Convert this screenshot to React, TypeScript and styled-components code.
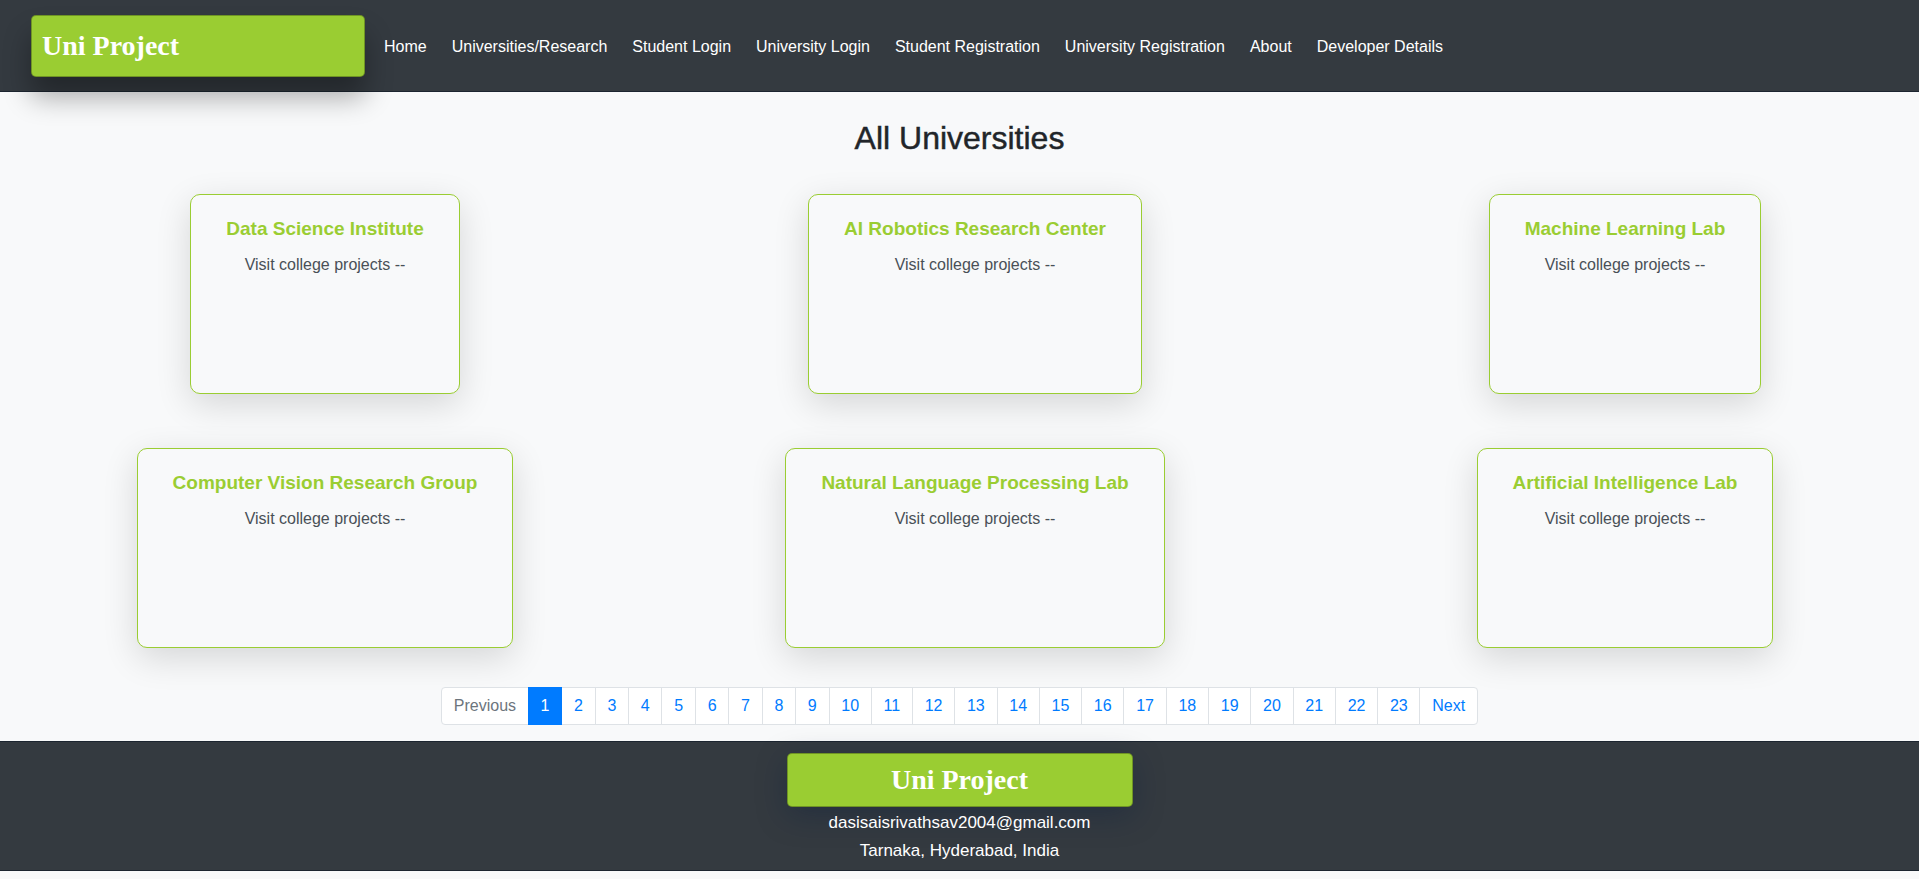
import React from "react";
import styled, { createGlobalStyle } from "styled-components";

const GlobalStyle = createGlobalStyle`
  *, *::before, *::after { box-sizing: border-box; }
  html, body { margin: 0; padding: 0; }
  body {
    background: #f8f9fa;
    color: #212529;
    font-family: "Liberation Sans", Arial, sans-serif;
    overflow-x: hidden;
  }
`;

const Header = styled.header`
  position: relative;
  z-index: 2;
  display: flex;
  align-items: center;
  height: 92px;
  padding-left: 31px;
  background: #343a40;
  border-bottom: 1px solid #1c2530;
`;

const Brand = styled.div<{ $wide?: boolean }>`
  display: flex;
  align-items: center;
  justify-content: ${(p) => (p.$wide ? "center" : "flex-start")};
  width: ${(p) => (p.$wide ? "346px" : "334px")};
  height: ${(p) => (p.$wide ? "54px" : "62px")};
  padding-left: ${(p) => (p.$wide ? "0" : "10px")};
  background: #9acd32;
  border: 1px solid rgba(0, 0, 0, 0.28);
  border-radius: 5px;
  box-shadow: ${(p) =>
    p.$wide ? "0 8px 30px rgba(10, 30, 60, 0.35)" : "0 20px 28px rgba(0, 0, 0, 0.33)"};
  color: #fff;
  font-family: "Liberation Serif", "Times New Roman", serif;
  font-weight: 700;
  font-size: 28px;
  line-height: 1;
`;

const Nav = styled.nav`
  display: flex;
  align-items: center;
  gap: 25px;
  margin-left: 19px;
  padding-top: 3px;
`;

const NavLink = styled.a`
  color: #fff;
  font-size: 16px;
  line-height: 24px;
  text-decoration: none;
  white-space: nowrap;
`;

const Main = styled.main`
  padding-top: 27px;
  overflow-x: clip;
`;

const PageTitle = styled.h2`
  margin: 0 0 37px;
  text-align: center;
  font-size: 32px;
  font-weight: 500;
  line-height: 1.2;
  color: #212529;
  -webkit-text-stroke: 0.45px #212529;
`;

const Grid = styled.div`
  display: grid;
  grid-template-columns: repeat(3, 650px);
  grid-auto-rows: 200px;
  row-gap: 54px;
  justify-items: center;
  width: 1950px;
`;

const Card = styled.div`
  height: 200px;
  padding: 22px 35px 18px;
  background: #f8f9fa;
  border: 1px solid #9acd32;
  border-radius: 10px;
  box-shadow: 0 10px 35px rgba(0, 0, 0, 0.14);
  text-align: center;
`;

const CardTitle = styled.h5`
  margin: 0 0 12px;
  font-size: 19px;
  font-weight: 700;
  line-height: 24px;
  color: #9acd32;
  white-space: nowrap;
`;

const CardText = styled.p`
  margin: 0;
  font-size: 16px;
  line-height: 24px;
  color: #495057;
`;

const Pager = styled.ul`
  display: flex;
  justify-content: center;
  list-style: none;
  margin: 39px 0 16px;
  padding: 0;
`;

const PageItem = styled.li<{ $active?: boolean }>`
  position: relative;
  z-index: ${(p) => (p.$active ? 1 : 0)};
  margin-left: -1px;
  &:first-child { margin-left: 0; }
  &:first-child > a { border-radius: 4px 0 0 4px; }
  &:last-child > a { border-radius: 0 4px 4px 0; }
`;

const PageLink = styled.a<{ $active?: boolean; $disabled?: boolean }>`
  display: block;
  padding: 8px 11.75px;
  font-size: 16px;
  line-height: 20px;
  text-decoration: none;
  background: ${(p) => (p.$active ? "#007bff" : "#fff")};
  border: 1px solid ${(p) => (p.$active ? "#007bff" : "#dee2e6")};
  color: ${(p) => (p.$active ? "#fff" : p.$disabled ? "#6c757d" : "#007bff")};
`;

const Footer = styled.footer`
  display: flex;
  flex-direction: column;
  align-items: center;
  padding: 11px 0 7px;
  background: #343a40;
  border-top: 1px solid #1c2530;
  border-bottom: 1px solid #1c2530;
`;

const FooterBrandWrap = styled.div`
  margin-bottom: 4px;
`;

const FooterLines = styled.div`
  display: flex;
  flex-direction: column;
  align-items: center;
  gap: 4px;
`;

const FooterLine = styled.div`
  color: #fff;
  font-size: 17px;
  line-height: 24px;
`;

const universities = [
  "Data Science Institute",
  "AI Robotics Research Center",
  "Machine Learning Lab",
  "Computer Vision Research Group",
  "Natural Language Processing Lab",
  "Artificial Intelligence Lab",
];

const navItems = [
  "Home",
  "Universities/Research",
  "Student Login",
  "University Login",
  "Student Registration",
  "University Registration",
  "About",
  "Developer Details",
];

const pages = Array.from({ length: 23 }, (_, i) => i + 1);

export default function App() {
  return (
    <>
      <GlobalStyle />
      <Header>
        <Brand>Uni Project</Brand>
        <Nav>
          {navItems.map((n) => (
            <NavLink key={n} href="#">
              {n}
            </NavLink>
          ))}
        </Nav>
      </Header>
      <Main>
        <PageTitle>All Universities</PageTitle>
        <Grid>
          {universities.map((u) => (
            <Card key={u}>
              <CardTitle>{u}</CardTitle>
              <CardText>Visit college projects --</CardText>
            </Card>
          ))}
        </Grid>
        <Pager>
          <PageItem>
            <PageLink $disabled href="#">
              Previous
            </PageLink>
          </PageItem>
          {pages.map((p) => (
            <PageItem key={p} $active={p === 1}>
              <PageLink $active={p === 1} href="#">
                {p}
              </PageLink>
            </PageItem>
          ))}
          <PageItem>
            <PageLink href="#">Next</PageLink>
          </PageItem>
        </Pager>
      </Main>
      <Footer>
        <FooterBrandWrap>
          <Brand $wide>Uni Project</Brand>
        </FooterBrandWrap>
        <FooterLines>
          <FooterLine>dasisaisrivathsav2004@gmail.com</FooterLine>
          <FooterLine>Tarnaka, Hyderabad, India</FooterLine>
        </FooterLines>
      </Footer>
    </>
  );
}
